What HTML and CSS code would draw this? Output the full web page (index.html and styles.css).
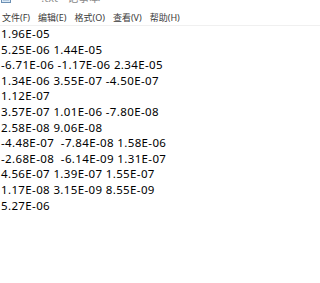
FILE: index.html
```
<!DOCTYPE html>
<html lang="zh-CN">
<head>
  <meta charset="UTF-8" />
  <title>****.txt - 记事本</title>
  <link rel="stylesheet" href="styles.css">
</head>
<body>
  <div class="titlebar">
    <div class="title-inner">
      <svg class="app-icon" width="10" height="12" viewBox="0 0 10 12">
        <rect x="0.5" y="0.5" width="9" height="11" fill="#dbe9f5" stroke="#6b8fb3"/>
        <line x1="2" y1="9" x2="8" y2="9" stroke="#8aa8c8"/>
      </svg>
      <span class="title-text">****.txt - 记事本</span>
    </div>
  </div>

  <ul class="menubar">
    <li>文件(F)</li>
    <li>编辑(E)</li>
    <li>格式(O)</li>
    <li>查看(V)</li>
    <li>帮助(H)</li>
  </ul>

  <pre class="editor">1.96E-05
5.25E-06 1.44E-05
-6.71E-06 -1.17E-06 2.34E-05
1.34E-06 3.55E-07 -4.50E-07
1.12E-07
3.57E-07 1.01E-06 -7.80E-08
2.58E-08 9.06E-08
-4.48E-07  -7.84E-08 1.58E-06
-2.68E-08  -6.14E-09 1.31E-07
4.56E-07 1.39E-07 1.55E-07
1.17E-08 3.15E-09 8.55E-09
5.27E-06</pre>
</body>
</html>
```
FILE: styles.css
```
html, body {
  margin: 0;
  background: #ffffff;
  font-family: "Noto Sans", "Noto Sans CJK SC", sans-serif;
}

.titlebar {
  height: 5px;
  overflow: hidden;
  display: flex;
  align-items: flex-end;
}

.title-inner {
  display: flex;
  align-items: center;
  gap: 6px;
  padding-left: 1px;
  height: 16px;
}

.title-text {
  font-size: 11px;
  color: #8a8a8a;
}

.menubar {
  list-style: none;
  margin: 0;
  padding: 7px 0 1px 2px;
  display: flex;
  gap: 8px;
  font-size: 9px;
  line-height: 12px;
  color: #3a3a3a;
  border-bottom: 1px solid #f0f0f0;
}

.editor {
  margin: 0;
  padding: 0 0 0 1px;
  font-family: "Noto Sans", "Noto Sans CJK SC", sans-serif;
  font-size: 11.5px;
  letter-spacing: 0.37px;
  line-height: 15.6px;
  color: #000000;
}
```
